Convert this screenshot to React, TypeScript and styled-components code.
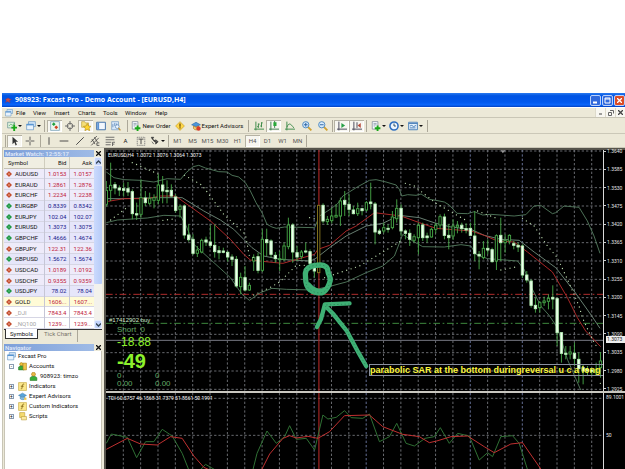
import React from "react";
import styled, { createGlobalStyle } from "styled-components";

const Global = createGlobalStyle`
  * { box-sizing: border-box; }
  html, body { margin: 0; background: #fff; }
  body { font: 6px/8px Roboto, "Liberation Sans", sans-serif; color: #111; overflow: hidden; }
  button { font: inherit; color: inherit; border: 0; padding: 0; margin: 0; background: none; }
`;

const Page = styled.main`
  height: 100vh;
  padding: 93px 0 0 2px;
  display: flex;
  flex-direction: column;
`;
const Window = styled.section`
  flex: 1;
  min-height: 0;
  display: flex;
  flex-direction: column;
  background: #ece9d8;
`;
const TitleBar = styled.header`
  height: 14px;
  flex: none;
  display: flex;
  align-items: center;
  gap: 3px;
  padding-left: 3px;
  background: linear-gradient(#2a7bf0, #0054e3 20%, #0058ee 65%, #0a66fb 85%, #003fc0);
  color: #fff;
`;
const Title = styled.h1`
  margin: 0;
  flex: 1;
  font: bold 7px/12px "Open Sans", sans-serif;
  white-space: nowrap;
`;
const Caption = styled.button<{ $close?: boolean }>`
  width: 11px;
  height: 11px;
  display: grid;
  place-items: center;
  border: 1px solid #bcd2fa;
  border-radius: 2px;
  background: ${(p) => (p.$close ? "#dc4c27" : "#3169dc")};
  margin-left: -2px;
`;
const MenuBar = styled.nav`
  height: 11px;
  flex: none;
  display: flex;
  align-items: center;
  padding-left: 3px;
  border-bottom: 1px solid #c9c6b6;
  border-top: 1px solid #fff;
`;
const Menus = styled.div`
  flex: 1;
  display: flex;
  padding-left: 3px;
`;
const MenuItem = styled.button<{ $w: number }>`
  width: ${(p) => p.$w}px;
  text-align: left;
`;
const ChildButton = styled.button`
  width: 10px;
  height: 9px;
  display: grid;
  place-items: center;
  background: #f8f7f1;
  border-left: 1px solid #dddacb;
`;
const Toolbar = styled.div<{ $h: number }>`
  height: ${(p) => p.$h}px;
  flex: none;
  display: flex;
  align-items: center;
  padding-left: 2px;
  border-bottom: 1px solid #cbc8b8;
`;
const Tool = styled.button<{ $w: number; $on?: boolean }>`
  width: ${(p) => p.$w}px;
  height: 12px;
  display: flex;
  align-items: center;
  justify-content: center;
  gap: 1px;
  white-space: nowrap;
  background: ${(p) => (p.$on ? "#f7f6f0" : "none")};
  box-shadow: ${(p) => (p.$on ? "inset 1px 1px #b5b2a3, inset -1px -1px #fff" : "none")};
`;
const Period = styled(Tool)`color: #555;`;
const Sep = styled.i<{ $w?: number }>`
  width: ${(p) => p.$w ?? 4}px;
  height: 12px;
  display: block;
  background: linear-gradient(#aca899, #aca899) center / 1px 100% no-repeat;
`;
const Drop = styled.span`
  border: 2px solid transparent;
  border-top-color: #111;
  border-bottom: 0;
`;
const Body = styled.div`
  flex: 1;
  min-height: 0;
  display: grid;
  grid-template-columns: 102px 1fr;
`;
const Side = styled.aside`
  padding: 1px 2px 0 1px;
  display: flex;
  flex-direction: column;
  min-height: 0;
  border-left: 1px solid #c8c5b6;
`;
const PanelHead = styled.h2`
  margin: 0;
  height: 8px;
  flex: none;
  display: flex;
  align-items: center;
  font-size: 6px;
  font-weight: 500;
  color: #e4ecfa;
`;
const PanelName = styled.span`
  flex: 1;
  height: 7px;
  line-height: 7px;
  padding-left: 1px;
  background: linear-gradient(90deg, #7d9fd9, #9fbbe6);
`;
const PanelClose = styled.button`
  width: 8px;
  height: 8px;
  display: grid;
  place-items: center;
`;
const Watch = styled.div`
  height: 172px;
  flex: none;
  display: flex;
  overflow: hidden;
`;
const Quotes = styled.table`
  flex: 1;
  height: 172px;
  table-layout: fixed;
  border-collapse: collapse;
  line-height: 7px;
  th, td { padding: 0 2px 0 0; text-align: right; }
  th { height: 11px; font-weight: 400; background: #f0eee2; border-bottom: 1px solid #c5c2b3; }
  th + th { border-left: 1px solid #d0cdbe; }
  td + td { border-left: 1px solid #c6c6d6; }
  th:first-child { text-align: left; padding-left: 4px; }
`;
const Quote = styled.tr<{ $tone: "up" | "down" | "gold" | "off" }>`
  background: ${(p) => ({ up: "#e6e6fa", down: "#eeebfa", gold: "#fffbd6", off: "#fff" })[p.$tone]};
  color: ${(p) => (p.$tone === "up" ? "#1a1a8c" : "#c01c3c")};
  border-bottom: 1px solid #d6d6e4;
`;
const SymbolCell = styled.td<{ $off: boolean }>`
  && { text-align: left; padding-left: 2px; }
  color: ${(p) => (p.$off ? "#a4a4a4" : "#111")};
`;
const Mark = styled.span<{ $up: boolean }>`
  display: inline-block;
  width: 4px;
  height: 4px;
  margin: 0 4px 0 1px;
  background: ${(p) => (p.$up ? "#45b06a" : "#dc8468")};
  outline: 1px solid ${(p) => (p.$up ? "#1c9440" : "#bf4628")};
  outline-offset: -1px;
  transform: rotate(45deg);
`;
const ScrollBar = styled.div`
  width: 8px;
  display: flex;
  flex-direction: column;
  background: #f3f2ec;
`;
const ScrollButton = styled.button`
  height: 9px;
  background: #c3d4fb;
  border: 1px solid #e6edfd;
  border-radius: 2px;
  display: grid;
  place-items: center;
`;
const Thumb = styled.span`
  height: 118px;
  background: linear-gradient(90deg, #cbdafd, #b7cbf8);
  border-radius: 1px;
  margin-bottom: auto;
`;
const Tabs = styled.div`
  height: 14px;
  flex: none;
  display: flex;
  align-items: flex-start;
  border-top: 1px solid #333;
`;
const Tab = styled.button<{ $on?: boolean }>`
  height: 10px;
  padding: 0 4px;
  margin: -1px 1px 0;
  background: ${(p) => (p.$on ? "#fff" : "none")};
  border: ${(p) => (p.$on ? "1px solid #333" : "0")};
  border-top: 0;
  color: ${(p) => (p.$on ? "#111" : "#77746a")};
`;
const Tree = styled.ul`
  flex: 1;
  margin: 0;
  padding: 0 0 0 2px;
  list-style: none;
  background: #fff;
  border: 1px solid #c8c5b6;
  border-width: 0 1px;
`;
const Node = styled.li<{ $depth: number }>`
  height: 10px;
  display: flex;
  align-items: center;
  gap: 2px;
  padding-left: ${(p) => p.$depth * 11}px;
  white-space: nowrap;
`;
const Toggle = styled.button`
  width: 5px;
  height: 5px;
  margin: 0 2px;
  border: 1px solid #8a9bb0;
  font-size: 5px;
  line-height: 3px;
  display: grid;
  place-items: center;
`;
const Charts = styled.section`
  min-width: 0;
  min-height: 0;
  display: grid;
  grid-template: 241px 2px 1fr / 1fr 21px;
  background: #000;
  border: solid #55534b;
  border-width: 2px 0 0 2px;
  color: #e4e4e4;
`;
const Plot = styled.div`
  position: relative;
  overflow: hidden;
  border-right: 1px solid #d8d8d8;
`;
const Canvas = styled.svg`
  display: block;
  width: 100%;
  height: 100%;
`;
const Divider = styled.hr`
  grid-column: 1 / -1;
  margin: 0;
  border: 0;
  background: #c9c7c0;
`;
const Legend = styled.span`
  position: absolute;
  left: 2px;
  top: 1px;
  font-size: 5px;
  color: #f4f4f4;
  white-space: nowrap;
`;
const PriceAxis = styled.div`
  position: relative;
  display: flex;
  flex-direction: column;
  justify-content: space-between;
  margin: -3px 0 -2px;
  font-size: 5px;
  line-height: 8px;
  white-space: nowrap;
`;
const Price = styled.span`
  display: flex;
  align-items: center;
  gap: 1px;
  &::before { content: ""; width: 2px; height: 1px; background: #ccc; }
`;
const LastPrice = styled.span`
  position: absolute;
  left: 2px;
  right: 0;
  top: 189px;
  height: 7px;
  line-height: 7px;
  padding-left: 1px;
  background: #eee;
  color: #222;
`;
const LowerAxis = styled.div`
  display: flex;
  flex-direction: column;
  gap: 30px;
  padding: 0 0 0 2px;
  font-size: 5px;
  line-height: 8px;
`;
const Account = styled.div`
  position: absolute;
  left: 3px;
  top: 166px;
  font-family: "Liberation Sans", sans-serif;
  color: #63a866;
`;
const OrderTag = styled.div`font-size: 6px; color: #cfe8cf;`;
const Line = styled.div<{ $size: number; $lh: number; $bright?: boolean }>`
  padding-left: 8px;
  font-size: ${(p) => p.$size}px;
  line-height: ${(p) => p.$lh}px;
  font-weight: ${(p) => (p.$size > 14 ? 700 : 400)};
  color: ${(p) => (p.$bright ? "#8cf02c" : "inherit")};
  display: grid;
  grid-template-columns: 38px 38px;
`;
const Total = styled(Line)`display: block;`;
const Note = styled.div`
  position: absolute;
  left: 263px;
  right: 0;
  top: 214px;
  height: 12px;
  border: 1px solid #8a90a0;
  border-right: 0;
  font: bold 9px/10px "Liberation Sans", sans-serif;
  color: #fbf63c;
  white-space: nowrap;
`;

const art: Record<string, React.ReactNode> = {
  chartAdd: <><path d="M1 2h11v9H1z" fill="#dff0df" stroke="#5a8a8a" /><path d="M3 8l3-3 3 2 3-4" stroke="#3a9a4a" fill="none" /><path d="M10 6h3v3h3v3h-3v4h-3v-4H7V9h3z" fill="#18a818" /></>,
  windows: <><path d="M4 1h11v8H4z" fill="#cfe4f8" stroke="#5b8fc0" /><path d="M1 5h11v9H1z" fill="#e9f3fc" stroke="#5b8fc0" /><path d="M1 6h11" stroke="#4d8fd0" strokeWidth="2" /></>,
  watch: <><path d="M1 1h14v14H1z" fill="#eef6ee" stroke="#5b8fb0" /><path d="M3 5l3-3 3 3-3 3z" fill="#20a040" /><path d="M7 10l3-3 3 3-3 3z" fill="#d04020" /></>,
  target: <><circle cx="8" cy="8" r="4.5" fill="none" stroke="#666" strokeWidth="1.5" /><path d="M8 0v6M8 10v6M0 8h6M10 8h6" stroke="#666" strokeWidth="1.5" /></>,
  favorites: <><path d="M1 1h5l1 2h5v7H1z" fill="#f5df7a" stroke="#b89830" /><path d="M10 4l2 4 4 .5-3 3 .8 4L10 13.500 6.200 15.500 7 11.500l-3-3L8 8z" fill="#ffd530" stroke="#b08a18" /></>,
  terminal: <><path d="M1 2h14v12H1z" fill="#f2f7fd" stroke="#3c6ea8" strokeWidth="1.500" /><path d="M2 3h3v10H2z" fill="#5b93d6" /></>,
  tester: <><path d="M1 1h11v13H1z" fill="#d8e8f8" stroke="#6a94c0" /><path d="M3 10V5M6 8V3M9 10V4" stroke="#3c6ea8" /><circle cx="10" cy="9" r="3" fill="#eef6ff" stroke="#4a7ab0" /><path d="M12 11l3 4" stroke="#c09030" strokeWidth="2" /></>,
  order: <><path d="M2 1h9v12H2z" fill="#f8fbff" stroke="#678" /><path d="M4 4h5M4 6h5M4 8h3" stroke="#789" /><path d="M9 7h3v3h3v3h-3v3H9v-3H6v-3h3z" fill="#18a818" /></>,
  alert: <><path d="M8 1l7 7-7 7-7-7z" fill="#ffd84a" stroke="#c69818" /><path d="M8 4v5M8 10v2" stroke="#6b4a00" strokeWidth="2" /></>,
  expert: <><path d="M1 6l7-4 7 4-7 3z" fill="#4d96d8" stroke="#2b6aa8" /><path d="M4 8v4c2 3 7 3 8 0V8L8 10z" fill="#f2c86a" stroke="#a87820" /><circle cx="12" cy="12" r="3.500" fill="#d83c28" /></>,
  advisor: <><path d="M1 6l7-4 7 4-7 3z" fill="#58a4dc" stroke="#3278a8" /><path d="M4 8v4c2 2 7 2 8 0V8L8 10z" fill="#8cc0e0" stroke="#3278a8" /><path d="M11 10h4v4h-4z" fill="#f0c850" /></>,
  bars: <path d="M3 1v14M0 13h16M7 4v7M5 9h2M7 5h2M12 2v8M10 8h2M12 3h2" stroke="#3b8a48" strokeWidth="1.500" fill="none" />,
  candles: <><path d="M3 1v14M0 13h16M9 0v11" stroke="#3b7a48" strokeWidth="1.500" /><path d="M7 2h5v6H7z" fill="#28a838" /></>,
  line: <path d="M3 1v14M0 13h16M3 10c3-8 6-6 11 1" stroke="#3b8a48" strokeWidth="1.500" fill="none" />,
  zoomIn: <><path d="M9 9l6 6" stroke="#d0a030" strokeWidth="3" /><circle cx="6" cy="6" r="5" fill="#d8ecfc" stroke="#4a86c0" strokeWidth="1.500" /><path d="M3 6h6M6 3v6" stroke="#2860a0" strokeWidth="1.500" /></>,
  zoomOut: <><path d="M9 9l6 6" stroke="#d0a030" strokeWidth="3" /><circle cx="6" cy="6" r="5" fill="#d8ecfc" stroke="#4a86c0" strokeWidth="1.500" /><path d="M3 6h6" stroke="#2860a0" strokeWidth="1.500" /></>,
  scroll: <><path d="M3 1v14M0 13h16" stroke="#445" strokeWidth="1.500" /><path d="M7 3l6 4-6 4z" fill="#28a048" /></>,
  shift: <><path d="M3 1v14M0 13h16M8 2v9" stroke="#445" strokeWidth="1.500" /><path d="M14 3L9 7l5 4z" fill="#b84a38" /></>,
  clock: <><circle cx="8" cy="8" r="6.500" fill="#eef6ff" stroke="#2f6fc0" strokeWidth="2.500" /><path d="M8 4v4h3" stroke="#245" fill="none" strokeWidth="1.500" /></>,
  template: <><path d="M1 2h14v12H1z" fill="#e4f0fc" stroke="#4a7fb8" strokeWidth="1.500" /><path d="M1 4h14M3 8l3-1 3 2 4-2M3 11h9" stroke="#4a7fb8" fill="none" strokeWidth="1.500" /></>,
  cursor: <path d="M4 1v12l3-3 2 5 2-1-2-5h4z" fill="#333" />,
  cross: <path d="M8 1v6M8 9v6M1 8h6M9 8h6" stroke="#555" strokeWidth="1.500" />,
  vline: <path d="M8 2v12" stroke="#444" strokeWidth="1.500" />,
  hline: <path d="M1 8h14" stroke="#444" strokeWidth="1.500" />,
  trend: <path d="M2 14L14 2" stroke="#444" strokeWidth="1.500" />,
  channel: <path d="M1 10L11 0M2 15L14 3M3 5l5 8M7 2l5 8M11 11h4M11 15h4M11 11v4" stroke="#444" strokeWidth="1.300" />,
  fibo: <path d="M1 2h14M1 6h14M1 10h9M1 14h8M12 10v6M12 10h4M12 13h3" stroke="#555" strokeWidth="1.300" />,
  label: <><path d="M2 2h12v13H2z" stroke="#777" strokeDasharray="2 1" strokeWidth="1.300" /><path d="M4 5h8M8 5v8" stroke="#444" strokeWidth="1.500" /></>,
  arrows: <path d="M2 2l4 0-2 3zM3 4l4 5h5M9 6l4 3-4 4zM3 9l3 4" fill="#333" stroke="#333" />,
  app: <path d="M1 5l6-3 8 4-5 2 2 5-7-3-4 3 2-5z" fill="#c44a4a" stroke="#5d3f7c" />,
  accounts: <><circle cx="6" cy="4" r="3" fill="#f0c040" stroke="#a87c10" /><path d="M1 14V9l3-2h4l3 2v5z" fill="#38a838" stroke="#287828" /><path d="M9 2h6v12H9z" fill="#eec44c" stroke="#a87c10" /></>,
  user: <><circle cx="8" cy="4" r="3.500" fill="#e8b848" stroke="#a87c10" /><path d="M2 15v-5l3-2h6l3 2v5z" fill="#38b038" stroke="#287828" /></>,
  func: <><path d="M1 1h14v14H1z" fill="#fbe88c" stroke="#c0a030" /><path d="M11 4c-3-1-3 1-3.500 4S7 13 5 12M5 7.500h5" stroke="#806010" fill="none" strokeWidth="1.500" /></>,
  script: <><path d="M3 1h9v9H3z" fill="#f4da70" stroke="#b89830" /><path d="M6 8h9v6H6z" fill="#fbe9a0" stroke="#b89830" /></>,
};

const Icon = ({ name, size = 10 }: { name: string; size?: number }) => (
  <svg width={size} height={size} viewBox="0 0 16 16" fill="none" aria-hidden="true">{art[name]}</svg>
);

type ToolSpec = { icon?: string; w: number; on?: boolean; drop?: boolean; text?: string; sep?: boolean };
const mainTools: ToolSpec[] = [
  { icon: "chartAdd", w: 20, drop: true }, { icon: "windows", w: 18, drop: true }, { sep: true, w: 5 },
  { icon: "watch", w: 15, on: true }, { icon: "target", w: 16 }, { icon: "favorites", w: 15, on: true },
  { icon: "terminal", w: 15 }, { icon: "tester", w: 16 }, { sep: true, w: 6 },
  { icon: "order", w: 42, text: "New Order" }, { icon: "alert", w: 16 },
  { icon: "expert", w: 58, text: "Expert Advisors" }, { sep: true, w: 5 },
  { icon: "bars", w: 15 }, { icon: "candles", w: 15, on: true }, { icon: "line", w: 18 },
  { icon: "zoomIn", w: 16 }, { icon: "zoomOut", w: 15 }, { sep: true, w: 4 },
  { icon: "scroll", w: 15, on: true }, { icon: "shift", w: 15, on: true }, { sep: true, w: 5 },
  { icon: "order", w: 18, drop: true }, { icon: "clock", w: 19, drop: true }, { icon: "template", w: 19, drop: true },
  { sep: true, w: 4 },
];
const drawTools: ToolSpec[] = [
  { sep: true, w: 3 }, { icon: "cursor", w: 15, on: true }, { icon: "cross", w: 16 }, { sep: true, w: 4 },
  { icon: "vline", w: 14 }, { icon: "hline", w: 16 }, { icon: "trend", w: 15 }, { icon: "channel", w: 15 },
  { icon: "fibo", w: 16 }, { text: "A", w: 15 }, { icon: "label", w: 15 }, { icon: "arrows", w: 18, drop: true },
  { sep: true, w: 4 },
];
const periods = ["M1", "M5", "M15", "M30", "H1", "H4", "D1", "W1", "MN"];
const menus: [string, number][] = [["File", 17], ["View", 21], ["Insert", 24], ["Charts", 25], ["Tools", 22], ["Window", 30], ["Help", 20]];

const Tools = ({ items }: { items: ToolSpec[] }) => (
  <>
    {items.map((t, i) =>
      t.sep ? <Sep key={i} $w={t.w} /> : (
        <Tool key={i} $w={t.w} $on={t.on} aria-label={t.text ?? t.icon}>
          {t.icon && <Icon name={t.icon} />}
          {t.text}
          {t.drop && <Drop />}
        </Tool>
      ),
    )}
  </>
);

type Tone = "up" | "down" | "gold" | "off";
const quotes: [string, string, string, Tone][] = [
  ["AUDUSD", "1.0153", "1.0157", "down"], ["EURAUD", "1.2861", "1.2876", "down"],
  ["EURCHF", "1.2234", "1.2238", "down"], ["EURGBP", "0.8339", "0.8342", "up"],
  ["EURJPY", "102.04", "102.07", "up"], ["EURUSD", "1.3073", "1.3075", "up"],
  ["GBPCHF", "1.4666", "1.4674", "up"], ["GBPJPY", "122.31", "122.36", "down"],
  ["GBPUSD", "1.5672", "1.5674", "up"], ["USDCAD", "1.0189", "1.0192", "down"],
  ["USDCHF", "0.9355", "0.9359", "down"], ["USDJPY", "78.02", "78.04", "up"],
  ["GOLD", "1606...", "1607...", "gold"], ["_DJI", "7843.4", "7843.4", "off"],
  ["_NQ100", "1239...", "1239...", "off"],
];

const tree: { icon: string; text: string; depth: number; sign?: string }[] = [
  { icon: "windows", text: "Fxcast Pro", depth: 0 },
  { icon: "accounts", text: "Accounts", depth: 0, sign: "-" },
  { icon: "user", text: "908923: timzo", depth: 2 },
  { icon: "func", text: "Indicators", depth: 0, sign: "+" },
  { icon: "advisor", text: "Expert Advisors", depth: 0, sign: "+" },
  { icon: "func", text: "Custom Indicators", depth: 0, sign: "+" },
  { icon: "script", text: "Scripts", depth: 0, sign: "+" },
];

/* Chart units are thirds of a pixel; bars are 13.03 units apart.
   Each bar: high, body top, body bottom, low, kind (0 solid, 1 hollow, 2 highlighted). */
const STEP = 13.03;
const bars: number[][] = [
  [105,133,175,182,1],[50,118,133,165,1],[108,116,126,145,0],[118,126,132,150,0],[110,128,133,152,0],[108,128,138,150,0],
  [130,137,203,220,0],[170,203,207,222,0],[100,155,205,215,1],[135,156,170,180,0],[140,158,172,178,1],[145,155,163,187,1],
  [85,117,163,175,1],[90,117,135,172,0],[103,133,137,172,0],[115,133,150,155,0],[145,153,193,200,0],[175,182,190,215,1],
  [175,180,267,278,0],[235,267,281,287,0],[265,280,322,327,0],[300,312,322,333,1],[278,283,318,322,1],[272,282,288,300,0],
  [238,288,298,305,0],[235,298,317,335,0],[300,314,320,340,0],[305,315,319,322,0],[315,319,333,347,0],[325,333,340,360,0],
  [330,340,420,425,0],[380,394,422,445,1],[360,395,432,437,0],[410,418,432,435,1],[325,334,345,375,1],[320,332,373,382,0],
  [250,280,373,378,1],[248,281,290,330,0],[280,285,325,335,0],[318,328,338,350,0],[315,338,341,375,1],[290,300,340,345,1],
  [215,237,302,310,1],[232,237,318,350,0],[300,320,333,345,0],[312,318,332,340,1],[290,315,318,322,0],[310,317,352,358,0],
  [350,358,375,395,0],[178,178,380,380,2],[172,178,225,232,0],[210,220,227,237,1],[185,210,224,232,1],[175,208,213,215,1],
  [155,165,210,240,1],[135,163,175,210,0],[145,175,190,210,0],[180,192,203,205,0],[170,188,203,210,1],[185,188,194,208,0],
  [165,170,192,197,1],[110,168,173,190,0],[168,174,258,295,0],[248,255,262,267,0],[230,245,255,262,1],[235,247,250,260,0],
  [195,213,245,250,1],[160,187,218,230,1],[175,187,255,270,0],[250,255,262,280,0],[250,262,280,300,0],[265,272,283,290,1],
  [230,238,275,325,1],[230,237,275,285,0],[260,270,275,290,0],[245,250,273,275,1],[230,238,250,262,1],[205,212,237,250,1],
  [203,213,268,280,0],[235,268,275,310,0],[220,240,270,282,1],[225,238,243,262,1],[230,238,248,260,0],[232,248,252,262,0],
  [230,247,268,270,0],[195,270,323,345,0],[315,325,330,370,0],[285,307,335,340,1],[280,307,312,325,0],[305,311,347,350,0],
  [265,269,345,372,1],[215,268,290,345,0],[265,283,290,320,1],[265,268,285,295,1],[285,293,298,310,0],[290,298,303,318,0],
  [295,300,387,395,0],[375,387,402,410,0],[400,405,478,485,0],[455,478,488,500,0],[465,470,485,500,1],[452,465,470,480,1],
  [445,457,466,490,1],[418,454,459,490,0],[455,458,560,600,0],[558,560,622,650,0],[600,622,625,640,0],[600,618,624,640,1],
  [590,622,637,660,0],[620,640,668,710,0],[655,665,675,715,0],[660,670,675,690,0],[665,672,676,690,0],[650,670,680,690,1],
  [618,645,665,695,1],
];

const upper = "7,78 30,95 60,101 110,103 150,108 190,98 230,100 247,80 268,62 285,58 305,66 345,77 370,78 385,88 405,93 425,110 440,135 457,170 475,200 490,235 505,243 518,247 543,243 633,245 648,210 683,188 703,172 718,150 763,122 798,103 818,101 848,108 878,117 888,130 895,150 913,146 938,148 953,144 978,160 998,163 1023,168 1038,177 1061,202 1093,203 1113,197 1138,207 1163,205 1233,210 1268,206 1293,180 1313,178 1348,203 1358,200 1383,180 1428,184 1453,225 1473,270 1491,322";
const middle = "7,158 60,158 160,155 235,155 300,195 350,222 390,250 420,280 445,305 480,330 505,335 528,340 618,345 633,340 678,305 728,270 788,240 838,232 888,208 948,215 998,232 1043,243 1103,250 1143,268 1193,280 1248,283 1293,318 1358,365 1413,435 1465,508 1491,547";
const average = "7,167 60,158 130,158 170,150 215,150 250,175 320,225 380,280 420,325 440,342 505,349 538,352 573,342 633,325 643,310 678,298 728,255 758,240 813,200 893,210 948,230 998,247 1103,255 1143,268 1183,285 1233,288 1273,318 1348,378 1393,455 1423,515 1448,555 1493,602";
const lower = "7,230 40,222 130,216 180,208 230,210 245,235 270,295 380,395 415,445 437,463 470,440 505,427 548,430 628,432 683,420 728,408 788,380 838,360 873,330 898,265 928,285 958,302 1023,303 1073,296 1103,300 1118,325 1153,338 1243,345 1263,370 1283,420 1313,480 1338,508 1363,545 1393,640 1433,732";
const sar = [
  "85,50 165,85", "20,222 75,180", "177,223 217,218", "242,88 260,98 295,118 360,205 425,265 437,330 450,335",
  "450,447 498,425 528,408 578,358 608,358", "618,215 632,218", "663,395 768,360 893,285", "906,112 933,120 998,172 1088,223",
  "1123,195 1183,218", "1193,372 1243,362", "1258,217 1293,240 1333,300 1363,335 1393,400 1428,480 1438,515 1468,580 1483,605", "1492,712 1493,712",
];
const tdiGreen = "7,400 22,372 70,382 98,443 125,395 150,395 175,358 205,378 235,430 255,480 285,485 305,463 335,480 380,540 440,510 460,430 490,363 518,400 543,380 558,347 578,388 608,385 633,420 658,315 673,327 698,322 723,302 743,323 778,325 798,312 828,395 858,380 880,340 908,400 933,408 965,385 993,380 1011,353 1038,400 1063,370 1098,378 1128,450 1153,428 1168,440 1193,380 1228,377 1248,400 1275,485";
const tdiRed = "7,418 70,385 110,402 160,405 200,380 235,385 270,438 300,472 340,490 440,510 475,477 498,432 538,385 558,377 578,384 613,379 643,385 678,365 723,317 798,315 838,350 898,373 948,380 978,398 1000,393 1043,380 1093,378 1143,410 1173,428 1223,402 1258,398 1313,477";

const GRID = "#777a80";
const verticals = Array.from({ length: 28 }, (_, i) => 58 + i * 52.15);
const VerticalGrid = ({ y1, y2 }: { y1: number; y2: number }) => (
  <g stroke={GRID} strokeWidth={2.6} strokeDasharray="7 6">
    {verticals.map((x, i) => (
      <line key={i} x1={x} x2={x} y1={y1} y2={y2} stroke={[11, 14, 20, 23].includes(i) ? "#7480ac" : undefined} />
    ))}
  </g>
);

const PriceChart = () => (
  <Canvas viewBox="6 12 1494 723" preserveAspectRatio="none" role="img" aria-label="EURUSD H4 candlestick chart">
    <VerticalGrid y1={12} y2={735} />
    <g stroke={GRID} strokeWidth={2.6} strokeDasharray="7 6">
      {Array.from({ length: 14 }, (_, i) => <line key={i} x1={6} x2={1500} y1={15 + i * 55} y2={15 + i * 55} />)}
    </g>
    <path d="M6 445H1500" stroke="#b02c2c" strokeWidth={3} strokeDasharray="20 8 5 8" />
    <path d="M6 532H1500" stroke="#3e8a3e" strokeWidth={3} strokeDasharray="20 8 5 8" />
    <path d="M6 583H1500" stroke="#777985" strokeWidth={3} />
    <g fill="none" strokeWidth={2.8}>
      <polyline points={upper} stroke="#52785c" />
      <polyline points={lower} stroke="#52785c" />
      <polyline points={middle} stroke="#6f8878" />
      <polyline points={average} stroke="#b62a2a" />
    </g>
    <path d="M646 12V735" stroke="#a82626" strokeWidth={3.5} />
    {bars.map(([h, t, b, l, kind], i) => {
      const x = 20 + (i - 1) * STEP;
      const edge = kind === 2 ? "#8a7a20" : "#45a546";
      return (
        <g key={i} stroke={edge} strokeWidth={2.8}>
          <path d={`M${x} ${h}V${t}M${x} ${b}V${l}`} />
          <rect x={x - 3.5} y={t} width={7} height={Math.max(b - t, 3)} fill={kind ? "#000" : "#f2fff0"} stroke={kind ? edge : "#b8f2b8"} />
        </g>
      );
    })}
    <g fill="none" stroke="#b9d8ac" strokeWidth={4} strokeLinecap="round" strokeDasharray="0 14">
      {sar.map((p) => <polyline key={p} points={p} />)}
    </g>
    <g fill="none" stroke="#3fb075" strokeLinecap="round" strokeLinejoin="round">
      <path d="M608 372C616 360 634 357 650 357C664 357 673 364 673 376C674 386 682 392 680 404C676 420 672 430 660 438C648 444 630 440 618 430C607 420 606 408 606 396C605 386 604 380 608 372" strokeWidth={16} />
      <path d="M616 414C628 430 646 438 662 430" strokeWidth={10} />
      <path d="M738 472L664 475L658 498L652 520L640 543" strokeWidth={13} />
      <path d="M665 480L690 505L730 555L765 620L788 660" strokeWidth={13} />
    </g>
    <g fill="none" stroke="#2b8f5c" strokeWidth={3} strokeDasharray="4 7">
      <path d="M608 372C616 360 634 357 650 357C664 357 673 364 673 376C674 386 682 392 680 404C676 420 672 430 660 438C648 444 630 440 618 430C607 420 606 408 606 396" />
      <path d="M738 474L664 477M665 480L690 505L730 555L765 620L788 660" />
    </g>
    <path d="M1192 13h14l-7 9z" fill="#999" />
  </Canvas>
);

const TdiChart = () => (
  <Canvas viewBox="6 249 1494 228" preserveAspectRatio="none" role="img" aria-label="TDI indicator">
    <VerticalGrid y1={249} y2={477} />
    <path d="M6 265H1500M6 376H1500" stroke={GRID} strokeWidth={2.6} strokeDasharray="7 6" />
    <path d="M646 249V477" stroke="#a82626" strokeWidth={3.5} />
    <polyline points={tdiGreen} fill="none" stroke="#2f7034" strokeWidth={3} />
    <polyline points={tdiRed} fill="none" stroke="#c03030" strokeWidth={3} />
  </Canvas>
);

const Cross = ({ color = "#111" }: { color?: string }) => (
  <svg width="5" height="5" viewBox="0 0 5 5" aria-hidden="true"><path d="M0 0l5 5M5 0L0 5" stroke={color} strokeWidth="1.300" /></svg>
);

export default function App() {
  return (
    <Page>
      <Global />
      <Window>
        <TitleBar>
          <Icon name="app" size={7} />
          <Title>908923: Fxcast Pro - Demo Account - [EURUSD,H4]</Title>
          <Caption aria-label="Minimize"><svg width="7" height="7"><path d="M1 5.500h4" stroke="#fff" strokeWidth="2" /></svg></Caption>
          <Caption aria-label="Maximize"><svg width="7" height="7"><path d="M1 1h5v5H1zM1 2h5" fill="none" stroke="#fff" /></svg></Caption>
          <Caption $close aria-label="Close"><Cross color="#fff" /></Caption>
        </TitleBar>
        <MenuBar>
          <Icon name="windows" size={8} />
          <Menus>{menus.map(([name, w]) => <MenuItem key={name} $w={w}>{name}</MenuItem>)}</Menus>
          <ChildButton aria-label="Minimize chart"><svg width="5" height="5"><path d="M1 4h3" stroke="#444" /></svg></ChildButton>
          <ChildButton aria-label="Restore chart"><svg width="6" height="6"><path d="M2 .5h3.500v3M.5 2.500h3v3h-3z" fill="none" stroke="#666" /></svg></ChildButton>
          <ChildButton aria-label="Close chart"><Cross color="#444" /></ChildButton>
        </MenuBar>
        <Toolbar $h={16}><Tools items={mainTools} /></Toolbar>
        <Toolbar $h={14}>
          <Tools items={drawTools} />
          {periods.map((p) => <Period key={p} $w={15} $on={p === "H4"}>{p}</Period>)}
          <Sep $w={3} />
        </Toolbar>
        <Body>
          <Side>
            <PanelHead><PanelName>Market Watch: 12:55:17</PanelName><PanelClose aria-label="Close Market Watch"><Cross /></PanelClose></PanelHead>
            <Watch>
              <Quotes>
                <colgroup><col /><col width="25" /><col width="25" /></colgroup>
                <thead><tr><th>Symbol</th><th>Bid</th><th>Ask</th></tr></thead>
                <tbody>
                  {quotes.map(([s, bid, ask, tone]) => (
                    <Quote key={s} $tone={tone}>
                      <SymbolCell $off={tone === "off"}><Mark $up={tone === "up"} />{s}</SymbolCell>
                      <td>{bid}</td><td>{ask}</td>
                    </Quote>
                  ))}
                </tbody>
              </Quotes>
              <ScrollBar>
                <ScrollButton aria-label="Scroll up"><svg width="5" height="4"><path d="M0 3.500L2.500 1 5 3.500" fill="none" stroke="#345" strokeWidth="1.300" /></svg></ScrollButton>
                <Thumb />
                <ScrollButton aria-label="Scroll down"><svg width="5" height="4"><path d="M0 .5L2.500 3 5 .5" fill="none" stroke="#345" strokeWidth="1.300" /></svg></ScrollButton>
              </ScrollBar>
            </Watch>
            <Tabs><Tab $on>Symbols</Tab><Tab>Tick Chart</Tab><Sep $w={3} /></Tabs>
            <PanelHead><PanelName>Navigator</PanelName><PanelClose aria-label="Close Navigator"><Cross /></PanelClose></PanelHead>
            <Tree>
              {tree.map((n) => (
                <Node key={n.text} $depth={n.depth}>
                  {n.sign && <Toggle aria-label={`Toggle ${n.text}`}>{n.sign}</Toggle>}
                  <Icon name={n.icon} size={9} />{n.text}
                </Node>
              ))}
            </Tree>
          </Side>
          <Charts>
            <Plot>
              <PriceChart />
              <Legend>EURUSD,H4&nbsp; 1.3072 1.3076 1.3064 1.3073</Legend>
              <Account>
                <OrderTag>#17412902 buy</OrderTag>
                <Line $size={8} $lh={11}><span>Short&nbsp; 0</span></Line>
                <Total $size={12} $lh={15} $bright>-18.88</Total>
                <Total $size={20} $lh={22} $bright>-49</Total>
                <Line $size={8} $lh={8}><span>0</span><span>0</span></Line>
                <Line $size={8} $lh={8}><span>0.00</span><span>0.00</span></Line>
              </Account>
              <Note>parabolic SAR at the bottom duringreversal u c a long t</Note>
            </Plot>
            <PriceAxis>
              {Array.from({ length: 14 }, (_, i) => <Price key={i}>{(1.364 - i * 0.0055).toFixed(4)}</Price>)}
              <LastPrice>1.3073</LastPrice>
            </PriceAxis>
            <Divider />
            <Plot><TdiChart /><Legend>TDI 60.5757 46.1568 31.7379 51.8561 50.1991</Legend></Plot>
            <LowerAxis><span>89.1001</span><span>50</span></LowerAxis>
          </Charts>
        </Body>
      </Window>
    </Page>
  );
}
